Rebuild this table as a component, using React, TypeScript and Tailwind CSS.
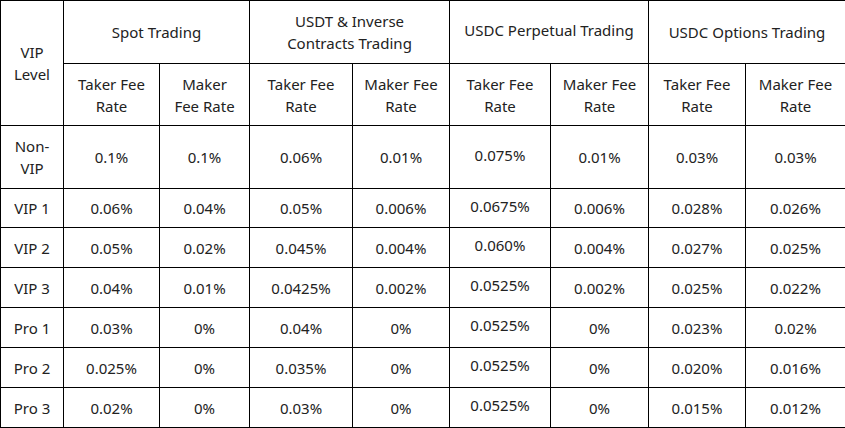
import React from "react";

// fee rows: level, spot taker/maker, usdt taker/maker, usdc perp taker/maker, options taker/maker
const rows: string[][] = [
  ["Non-VIP", "0.1%", "0.1%", "0.06%", "0.01%", "0.075%", "0.01%", "0.03%", "0.03%"],
  ["VIP 1", "0.06%", "0.04%", "0.05%", "0.006%", "0.0675%", "0.006%", "0.028%", "0.026%"],
  ["VIP 2", "0.05%", "0.02%", "0.045%", "0.004%", "0.060%", "0.004%", "0.027%", "0.025%"],
  ["VIP 3", "0.04%", "0.01%", "0.0425%", "0.002%", "0.0525%", "0.002%", "0.025%", "0.022%"],
  ["Pro 1", "0.03%", "0%", "0.04%", "0%", "0.0525%", "0%", "0.023%", "0.02%"],
  ["Pro 2", "0.025%", "0%", "0.035%", "0%", "0.0525%", "0%", "0.020%", "0.016%"],
  ["Pro 3", "0.02%", "0%", "0.03%", "0%", "0.0525%", "0%", "0.015%", "0.012%"],
];

const cell = "border border-black px-[10px] text-center align-middle";

export default function App() {
  return (
    <div className="bg-white w-[845px] h-[428px] overflow-hidden font-['Noto_Sans',sans-serif] text-[15px] leading-[22px] text-[#222]">
      <table className="border-collapse table-fixed w-[845px]">
        <colgroup>
          <col className="w-[63px]" />
          <col className="w-[96px]" />
          <col className="w-[90px]" />
          <col className="w-[103px]" />
          <col className="w-[97px]" />
          <col className="w-[101px]" />
          <col className="w-[98px]" />
          <col className="w-[97px]" />
          <col className="w-[100px]" />
        </colgroup>
        <thead>
          <tr className="h-[63px]">
            <th rowSpan={2} className={`${cell} font-normal px-0`}>
              VIP
              <br />
              Level
            </th>
            <th colSpan={2} className={`${cell} font-normal`}>Spot Trading</th>
            <th colSpan={2} className={`${cell} font-normal`}>USDT &amp; Inverse Contracts Trading</th>
            <th colSpan={2} className={`${cell} font-normal pb-[4px]`}>USDC Perpetual Trading</th>
            <th colSpan={2} className={`${cell} font-normal`}>USDC Options Trading</th>
          </tr>
          <tr className="h-[62px]">
            <th className={`${cell} font-normal`}>Taker Fee Rate</th>
            <th className={`${cell} font-normal`}>Maker Fee Rate</th>
            <th className={`${cell} font-normal`}>Taker Fee Rate</th>
            <th className={`${cell} font-normal`}>Maker Fee Rate</th>
            <th className={`${cell} font-normal`}>Taker Fee Rate</th>
            <th className={`${cell} font-normal`}>Maker Fee Rate</th>
            <th className={`${cell} font-normal`}>Taker Fee Rate</th>
            <th className={`${cell} font-normal`}>Maker Fee Rate</th>
          </tr>
        </thead>
        <tbody>
          {rows.map((r, i) => (
            <tr key={r[0]} className={i === 0 ? "h-[63px]" : i === 1 ? "h-[39px]" : "h-[40px]"}>
              {r.map((v, j) => (
                <td
                  key={j}
                  className={`${cell} ${j === 0 ? "px-[6px]" : ""} ${j === 5 ? "pb-[5px]" : ""}`}
                >
                  {v}
                </td>
              ))}
            </tr>
          ))}
        </tbody>
      </table>
    </div>
  );
}
